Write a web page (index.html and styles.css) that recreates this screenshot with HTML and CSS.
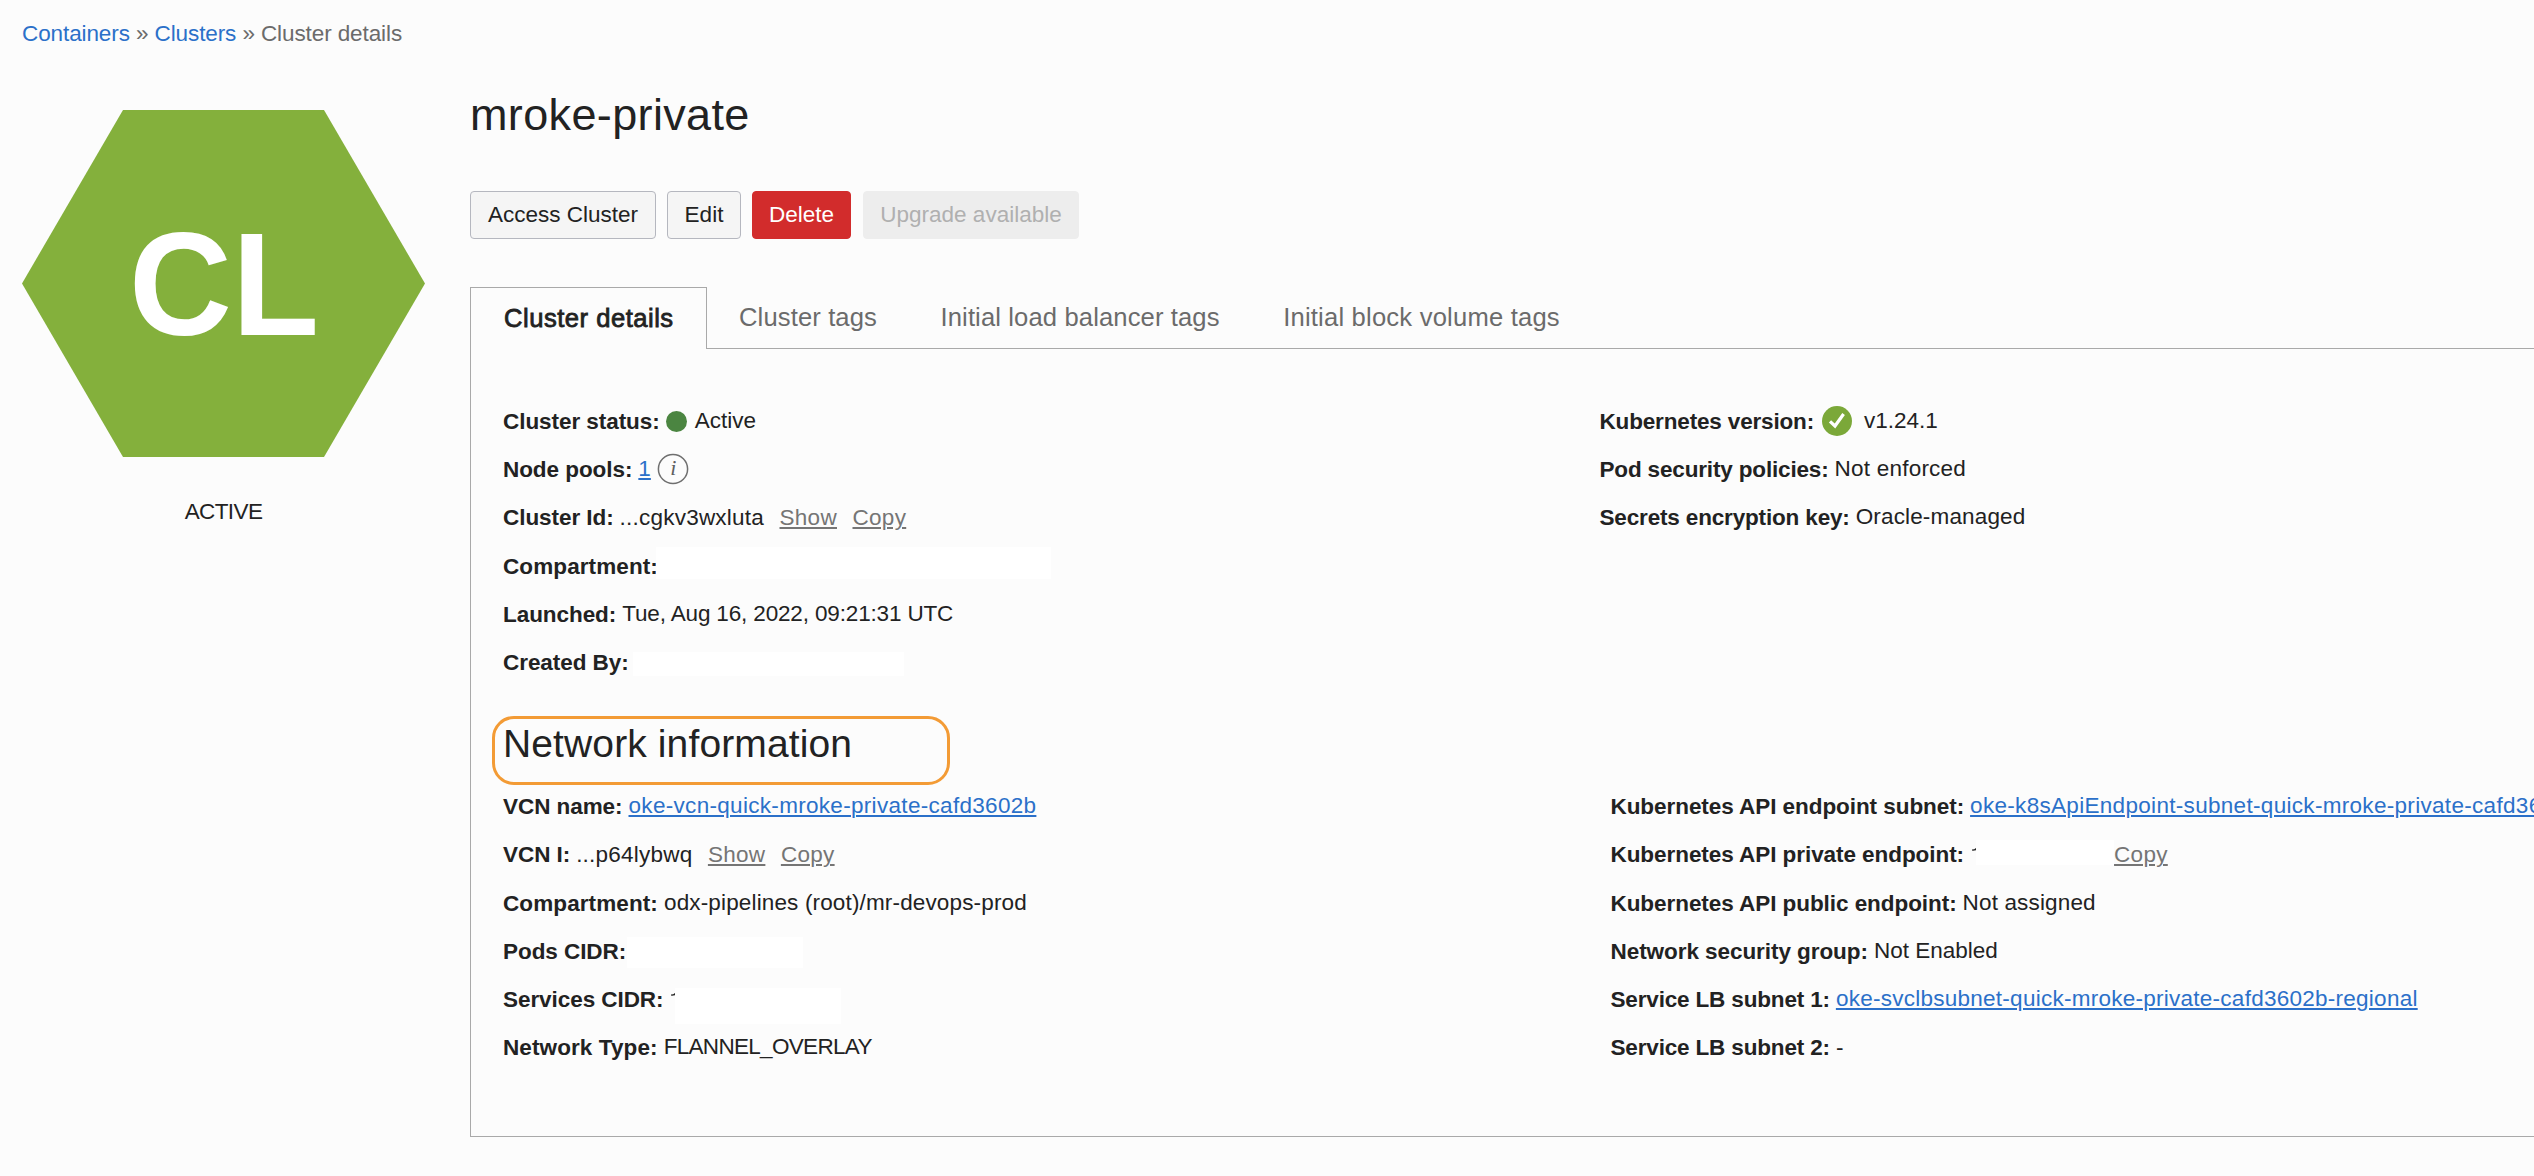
FILE: index.html
```html
<!DOCTYPE html>
<html lang="en">
<head>
<meta charset="utf-8">
<title>Cluster details</title>
<link rel="stylesheet" href="styles.css">
</head>
<body>
<nav class="breadcrumb"><a href="#">Containers</a> » <a href="#">Clusters</a> » <span>Cluster details</span></nav>
<main class="page">
  <aside class="resource">
    <svg class="hexagon" viewBox="0 0 403 347" width="403" height="347">
      <polygon points="101,0 302,0 403,173.5 302,347 101,347 0,173.5" fill="#84b03c"/>
      <text class="hexagon-text" x="107" y="225" textLength="190" lengthAdjust="spacingAndGlyphs">CL</text>
    </svg>
    <div class="state">ACTIVE</div>
  </aside>
  <section class="content">
    <h1 class="title">mroke-private</h1>
    <div class="actions">
      <button class="btn btn-access">Access Cluster</button>
      <button class="btn btn-edit">Edit</button>
      <button class="btn btn-delete">Delete</button>
      <button class="btn btn-upgrade" disabled>Upgrade available</button>
    </div>
    <div class="tabs">
      <div class="tab tab-active">Cluster details</div>
      <div class="tab">Cluster tags</div>
      <div class="tab">Initial load balancer tags</div>
      <div class="tab tab-loose">Initial block volume tags</div>
    </div>
    <div class="panel">
      <div class="columns">
        <div class="column">
          <div class="row"><b>Cluster status:</b><i class="dot"></i><span>Active</span></div>
          <div class="row"><b>Node pools:</b><a class="link" href="#">1</a>
            <svg class="info" viewBox="0 0 32 32" width="32" height="32"><circle cx="16" cy="16" r="14.6" fill="none" stroke="#6f6f6f" stroke-width="1.5"/><text x="16.2" y="22" class="info-text">i</text></svg>
          </div>
          <div class="row flush"><b>Cluster Id:</b><span class="track-2">...cgkv3wxluta</span><a class="action" href="#">Show</a><a class="action" href="#">Copy</a></div>
          <div class="row"><b class="label-plus">Compartment:</b><span class="mask mask-compartment"></span></div>
          <div class="row"><b>Launched:</b><span class="track-date">Tue, Aug 16, 2022, 09:21:31 UTC</span></div>
          <div class="row"><b>Created By:</b><span class="mask mask-creator"></span></div>
        </div>
        <div class="column">
          <div class="row"><b class="label-minus">Kubernetes version:</b>
            <svg class="check" viewBox="0 0 30 30" width="30" height="30"><circle cx="15" cy="15" r="15" fill="#7ba839"/><path d="M8 15.3l5 4.7L21.6 8" fill="none" stroke="#fff" stroke-width="3.2"/></svg>
            <span class="version">v1.24.1</span></div>
          <div class="row"><b class="label-minus">Pod security policies:</b><span class="track-2">Not enforced</span></div>
          <div class="row"><b class="label-minus">Secrets encryption key:</b><span class="track-1">Oracle-managed</span></div>
        </div>
      </div>
      <div class="section-head"><h2 class="section-title">Network information</h2><span class="highlight"></span></div>
      <div class="columns columns-network">
        <div class="column">
          <div class="row"><b>VCN name:</b><a class="link track-3" href="#">oke-vcn-quick-mroke-private-cafd3602b</a></div>
          <div class="row flush"><b>VCN I:</b><span class="track-2">...p64lybwq</span><a class="action" href="#">Show</a><a class="action" href="#">Copy</a></div>
          <div class="row"><b class="label-plus">Compartment:</b><span class="track-1">odx-pipelines (root)/mr-devops-prod</span></div>
          <div class="row"><b>Pods CIDR:</b><span class="mask mask-pods"></span></div>
          <div class="row"><b>Services CIDR:</b><svg class="tick" viewBox="0 0 4 3" width="4" height="3"><path d="M0 1.6Q2.5 1.6 4 0V2.2Q2 2.8 0 2.6z" fill="#222"/></svg><span class="mask mask-services"></span></div>
          <div class="row"><b class="label-plus">Network Type:</b><span class="track-caps">FLANNEL_OVERLAY</span></div>
        </div>
        <div class="column">
          <div class="row"><b>Kubernetes API endpoint subnet:</b><a class="link track-3" href="#">oke-k8sApiEndpoint-subnet-quick-mroke-private-cafd36</a></div>
          <div class="row flush"><b>Kubernetes API private endpoint:</b><svg class="tick" viewBox="0 0 4 3" width="4" height="3"><path d="M0 1.6Q2.5 1.6 4 0V2.2Q2 2.8 0 2.6z" fill="#222"/></svg><span class="mask mask-endpoint"></span><a class="action action-tight" href="#">Copy</a></div>
          <div class="row"><b>Kubernetes API public endpoint:</b><span class="track-1">Not assigned</span></div>
          <div class="row"><b>Network security group:</b><span>Not Enabled</span></div>
          <div class="row"><b class="label-minus">Service LB subnet 1:</b><a class="link track-4" href="#">oke-svclbsubnet-quick-mroke-private-cafd3602b-regional</a></div>
          <div class="row"><b class="label-minus">Service LB subnet 2:</b><span class="level">-</span></div>
        </div>
      </div>
    </div>
  </section>
</main>
</body>
</html>
```
FILE: styles.css
```css
* { box-sizing: border-box; }
html { overflow: hidden; }
body {
  margin: 0;
  height: 1176px;
  overflow: hidden;
  background: #fcfcfc;
  color: #222;
  font: 22.5px/32px "Liberation Sans", Arial, sans-serif;
  white-space: nowrap;
}
a { color: #2b70c9; text-decoration: none; }

.breadcrumb { padding: 18px 0 0 22px; height: 49px; color: #6b6b6b; letter-spacing: -0.1px; }
.page { display: flex; }

.resource { flex: 0 0 470px; padding: 61px 0 0 22px; }
.hexagon { display: block; }
.hexagon-text { font-size: 147px; font-weight: bold; fill: #fff; }
.state { width: 403px; margin-top: 39px; text-align: center; letter-spacing: -0.6px; }

.content { flex: 1; min-width: 0; padding-top: 36px; }
.title { margin: 0 0 46px; font-size: 45px; line-height: 60px; font-weight: normal; letter-spacing: 0.36px; }

.actions { display: flex; height: 48px; margin-bottom: 48px; }
.btn {
  height: 48px;
  margin: 0 11px 0 0;
  padding: 0;
  border: 1px solid #b5b7bf;
  border-radius: 4px;
  background: #f5f5f5;
  color: #222;
  font: inherit;
}
.btn-access { width: 186px; }
.btn-edit { width: 74px; }
.btn-delete { width: 99px; margin-right: 12px; border-color: #d22c2c; background: #d22c2c; color: #fff; }
.btn-upgrade { width: 216px; border-color: #ededed; background: #ededed; color: #b0b0b0; }

.tabs { display: flex; height: 62px; border-bottom: 1px solid #a9a9a9; font-size: 25.6px; }
.tab { margin-left: 32px; margin-right: 31.5px; line-height: 60px; color: #6b6b6b; letter-spacing: 0.12px; }
.tab-loose { letter-spacing: 0.2px; }
.tab-active {
  width: 237px;
  height: 62px;
  margin: 0;
  padding-left: 33px;
  border: 1px solid #a9a9a9;
  border-bottom: 0;
  background: #fcfcfc;
  color: #222;
  letter-spacing: 0.5px;
  -webkit-text-stroke: 0.8px #222;
}

.panel { height: 788px; padding: 48px 0 0 32px; border-left: 1px solid #a9a9a9; border-bottom: 1px solid #a9a9a9; }
.columns { display: grid; grid-template-columns: 1096.5px 1fr; }
.columns-network { grid-template-columns: 1107.5px 1fr; }
.row { display: flex; align-items: flex-start; height: 48.2px; }
.row b { margin-right: 6px; line-height: 50px; letter-spacing: -0.06px; }
.row .label-minus { letter-spacing: -0.16px; }
.row .label-plus { letter-spacing: 0.1px; }
.row span, .row a { line-height: 48px; }
.flush span, .flush a, .row .level { line-height: 50px; }

.link, .action { text-decoration: underline; text-decoration-thickness: 2px; text-underline-offset: 2px; }
.row .action { margin-left: 15.5px; color: #757575; letter-spacing: 0.3px; }
.row .action-tight { margin-left: 0; }

.track-1 { letter-spacing: 0.15px; }
.track-2 { letter-spacing: 0.22px; }
.track-3 { letter-spacing: 0.31px; }
.track-4 { letter-spacing: 0.26px; }
.track-date { letter-spacing: -0.15px; }
.track-caps { letter-spacing: -0.69px; }

.dot { width: 21px; height: 21px; margin: 14px 8px 0 0; border-radius: 50%; background: #4b8541; }
.info { margin: 8px 0 0 6px; }
.info-text { font: italic 22px "Liberation Serif", serif; fill: #5f5f5f; text-anchor: middle; }
.check { margin: 8.5px 12px 0 2px; }

.mask { background: #fff; }
.mask-compartment { width: 395px; height: 32px; margin: 5px 0 0 -8px; }
.mask-creator { width: 271.5px; height: 24px; margin: 14px 0 0 -2px; }
.mask-pods { width: 175.5px; height: 31px; margin: 10px 0 0 -5px; }
.mask-services { width: 166px; height: 36px; margin-top: 13px; }
.mask-endpoint { width: 138px; height: 25px; margin-top: 10px; }
.tick { margin: 18px 0 0 2px; }

.section-head { position: relative; height: 96px; padding-top: 31px; }
.section-title { margin: 0; font-size: 39px; line-height: 53px; font-weight: normal; letter-spacing: 0.12px; }
.highlight {
  position: absolute;
  left: -11px;
  top: 30px;
  width: 458px;
  height: 69px;
  border: 3px solid #f39b35;
  border-radius: 22px;
}
```
